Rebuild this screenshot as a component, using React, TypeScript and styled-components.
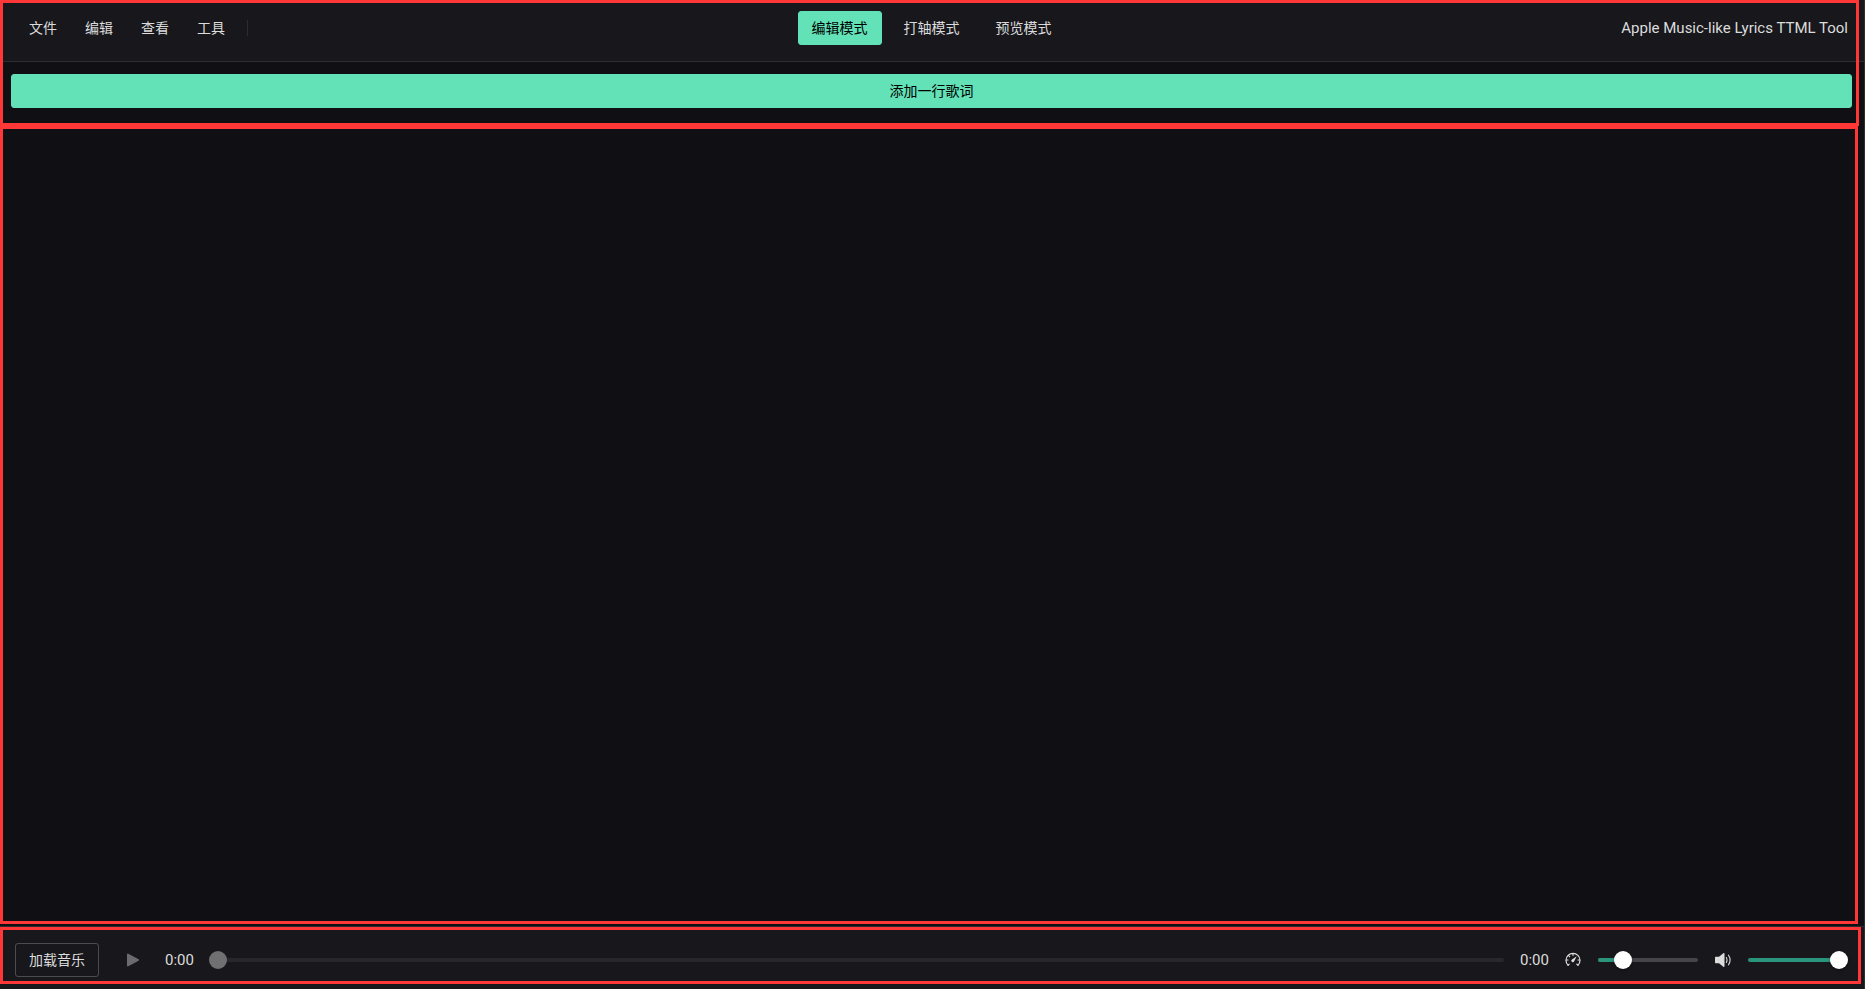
import React, { useState } from "react";
import styled, { createGlobalStyle } from "styled-components";

const GlobalStyle = createGlobalStyle`
  * { box-sizing: border-box; }
  body {
    margin: 0;
    background: #101014;
    color: #dcdcdd;
    font: 14px/22px "Open Sans", "Noto Sans CJK SC", sans-serif;
  }
  button { font: inherit; cursor: pointer; }
`;

const Page = styled.div`
  display: flex;
  flex-direction: column;
  min-height: 100vh;
  border-right: 1px solid #303033;
`;

const Region = styled.section<{ $grow?: boolean }>`
  position: relative;
  flex: ${(p) => (p.$grow ? "1" : "none")};
`;

const Marker = styled.div<{ $inset: string }>`
  position: absolute;
  inset: ${(p) => p.$inset};
  border: 3px solid #ff3737;
  pointer-events: none;
`;

const Header = styled.header`
  display: grid;
  grid-template-columns: 1fr auto 1fr;
  align-items: start;
  height: 62px;
  padding: 11px 16px 0 15px;
  background: #18181c;
  border-bottom: 1px solid #2d2d30;
`;

const MenuBar = styled.nav`
  display: flex;
  align-items: center;
  height: 34px;
`;

const MenuItem = styled.button`
  padding: 0 14px;
  border: 0;
  background: none;
  color: inherit;
`;

const Divider = styled.span`
  width: 1px;
  height: 16px;
  margin-left: 8px;
  background: #2d2d30;
`;

const Modes = styled.div`
  display: flex;
  gap: 8px;
`;

const Button = styled.button<{ $kind?: "primary" | "outline"; $block?: boolean }>`
  width: ${(p) => (p.$block ? "100%" : "auto")};
  height: 34px;
  padding: 0 13px;
  border: 1px solid ${(p) => (p.$kind === "primary" ? "#63e2b7" : p.$kind === "outline" ? "#4c4c4f" : "transparent")};
  border-radius: 3px;
  background: ${(p) => (p.$kind === "primary" ? "#63e2b7" : "transparent")};
  color: ${(p) => (p.$kind === "primary" ? "#000" : "inherit")};
`;

const Title = styled.h1`
  margin: 0;
  justify-self: end;
  font: 400 15px/34px Roboto, sans-serif;
`;

const AddBar = styled.div`
  padding: 12px 12px 18px 11px;
`;

const Player = styled.footer`
  display: flex;
  align-items: center;
  height: 63px;
  padding: 4px 16px 0 15px;
  background: #18181c;
  border-top: 1px solid #2d2d30;
`;

const PlayButton = styled.button`
  display: flex;
  margin: 0 24px 0 26px;
  padding: 0;
  border: 0;
  background: none;
  color: #6c6c6e;
`;

const Time = styled.span`
  width: 29px;
  margin-right: 8px;
  font: 15px/22px Roboto, sans-serif;
`;

const SliderBox = styled.label<{ $width?: number }>`
  display: grid;
  align-items: center;
  flex: ${(p) => (p.$width ? `0 0 ${p.$width}px` : "1")};
  height: 18px;
  margin: ${(p) => (p.$width ? "0" : "0 7px")};
  > * { grid-area: 1 / 1; }
`;

const Rail = styled.span<{ $off?: boolean }>`
  height: 4px;
  margin: 0 9px;
  overflow: hidden;
  border-radius: 2px;
  background: ${(p) => (p.$off ? "#28282c" : "#464648")};
`;

const Fill = styled.span`
  display: block;
  height: 100%;
  background: #2a947d;
`;

const Range = styled.input`
  appearance: none;
  width: 100%;
  height: 18px;
  margin: 0;
  background: none;
  &::-webkit-slider-thumb {
    appearance: none;
    width: 18px;
    height: 18px;
    border-radius: 50%;
    background: #fff;
    box-shadow: 0 1px 3px rgba(0, 0, 0, 0.4);
  }
  &:disabled::-webkit-slider-thumb {
    background: #707072;
    box-shadow: none;
  }
`;

const Icon = styled.svg`
  flex: none;
  width: 16px;
  height: 16px;
`;

const IconSlot = styled.span`
  display: flex;
  margin: 0 8px;
`;

interface SliderProps {
  label: string;
  value: number;
  max: number;
  width?: number;
  disabled?: boolean;
  onChange?: (value: number) => void;
}

function Slider({ label, value, max, width, disabled, onChange }: SliderProps) {
  return (
    <SliderBox $width={width}>
      <Rail $off={disabled}>
        <Fill style={{ width: `${(value / max) * 100}%` }} />
      </Rail>
      <Range
        type="range"
        aria-label={label}
        min={0}
        max={max}
        step={max / 100}
        value={value}
        disabled={disabled}
        onChange={(e) => onChange?.(Number(e.target.value))}
      />
    </SliderBox>
  );
}

function PlayIcon() {
  return (
    <Icon viewBox="0 0 16 16" fill="currentColor">
      <path d="M2 2.5c0-.7.7-1.100 1.300-.8l10.300 5.600c.6.3.6 1.100 0 1.400L3.300 14.300c-.6.3-1.300-.1-1.300-.8z" />
    </Icon>
  );
}

function GaugeIcon() {
  return (
    <Icon viewBox="0 0 16 16" fill="none" stroke="currentColor" strokeWidth="1.2" strokeLinecap="round">
      <path d="M3 13.200A7 7 0 1 1 13 13.200" />
      <path d="M8 1.500V3.300M3.400 3.400l1.200 1.200M1.300 8H3M13 8h1.700M3 13.200l1.200-1.100M13 13.200l-1.200-1.100" />
      <path d="M11.700 4.300 9.200 9.200A1.500 1.500 0 1 1 7 7.400z" fill="currentColor" stroke="none" />
    </Icon>
  );
}

function VolumeIcon() {
  return (
    <Icon viewBox="0 0 16 16" fill="currentColor">
      <path d="M1.200 4.800H4l4.300-3.500c.6-.5 1.200-.2 1.200.5v12.400c0 .7-.6 1-1.200.5L4 11.200H1.200C.5 11.200 0 10.800 0 10.200V5.800c0-.6.5-1 1.200-1z" />
      <path
        d="M11.300 5.500c.9 1.600.9 3.400 0 5M13.500 3.200c2 3 2 6.600 0 9.600"
        fill="none"
        stroke="currentColor"
        strokeWidth="1.1"
        strokeLinecap="round"
      />
    </Icon>
  );
}

const MENUS = ["文件", "编辑", "查看", "工具"];
const MODES = ["编辑模式", "打轴模式", "预览模式"];

export default function App() {
  const [mode, setMode] = useState(0);
  const [rate, setRate] = useState(1);
  const [volume, setVolume] = useState(1);

  return (
    <>
      <GlobalStyle />
      <Page>
        <Region>
          <Header>
            <MenuBar>
              {MENUS.map((m) => (
                <MenuItem key={m}>{m}</MenuItem>
              ))}
              <Divider />
            </MenuBar>
            <Modes>
              {MODES.map((m, i) => (
                <Button key={m} $kind={i === mode ? "primary" : undefined} onClick={() => setMode(i)}>
                  {m}
                </Button>
              ))}
            </Modes>
            <Title>Apple Music-like Lyrics TTML Tool</Title>
          </Header>
          <AddBar>
            <Button $kind="primary" $block>添加一行歌词</Button>
          </AddBar>
          <Marker $inset="0 5px 0 0" />
        </Region>
        <Region as="main" $grow>
          <Marker $inset="0 6px 2px 0" />
        </Region>
        <Region>
          <Player>
            <Button $kind="outline">加载音乐</Button>
            <PlayButton aria-label="播放" disabled>
              <PlayIcon />
            </PlayButton>
            <Time>0:00</Time>
            <Slider label="播放进度" value={0} max={100} disabled />
            <Time>0:00</Time>
            <IconSlot>
              <GaugeIcon />
            </IconSlot>
            <Slider label="播放速度" value={rate} max={4} width={118} onChange={setRate} />
            <IconSlot>
              <VolumeIcon />
            </IconSlot>
            <Slider label="音量" value={volume} max={1} width={109} onChange={setVolume} />
          </Player>
          <Marker $inset="1px 3px 5px 0" />
        </Region>
      </Page>
    </>
  );
}
